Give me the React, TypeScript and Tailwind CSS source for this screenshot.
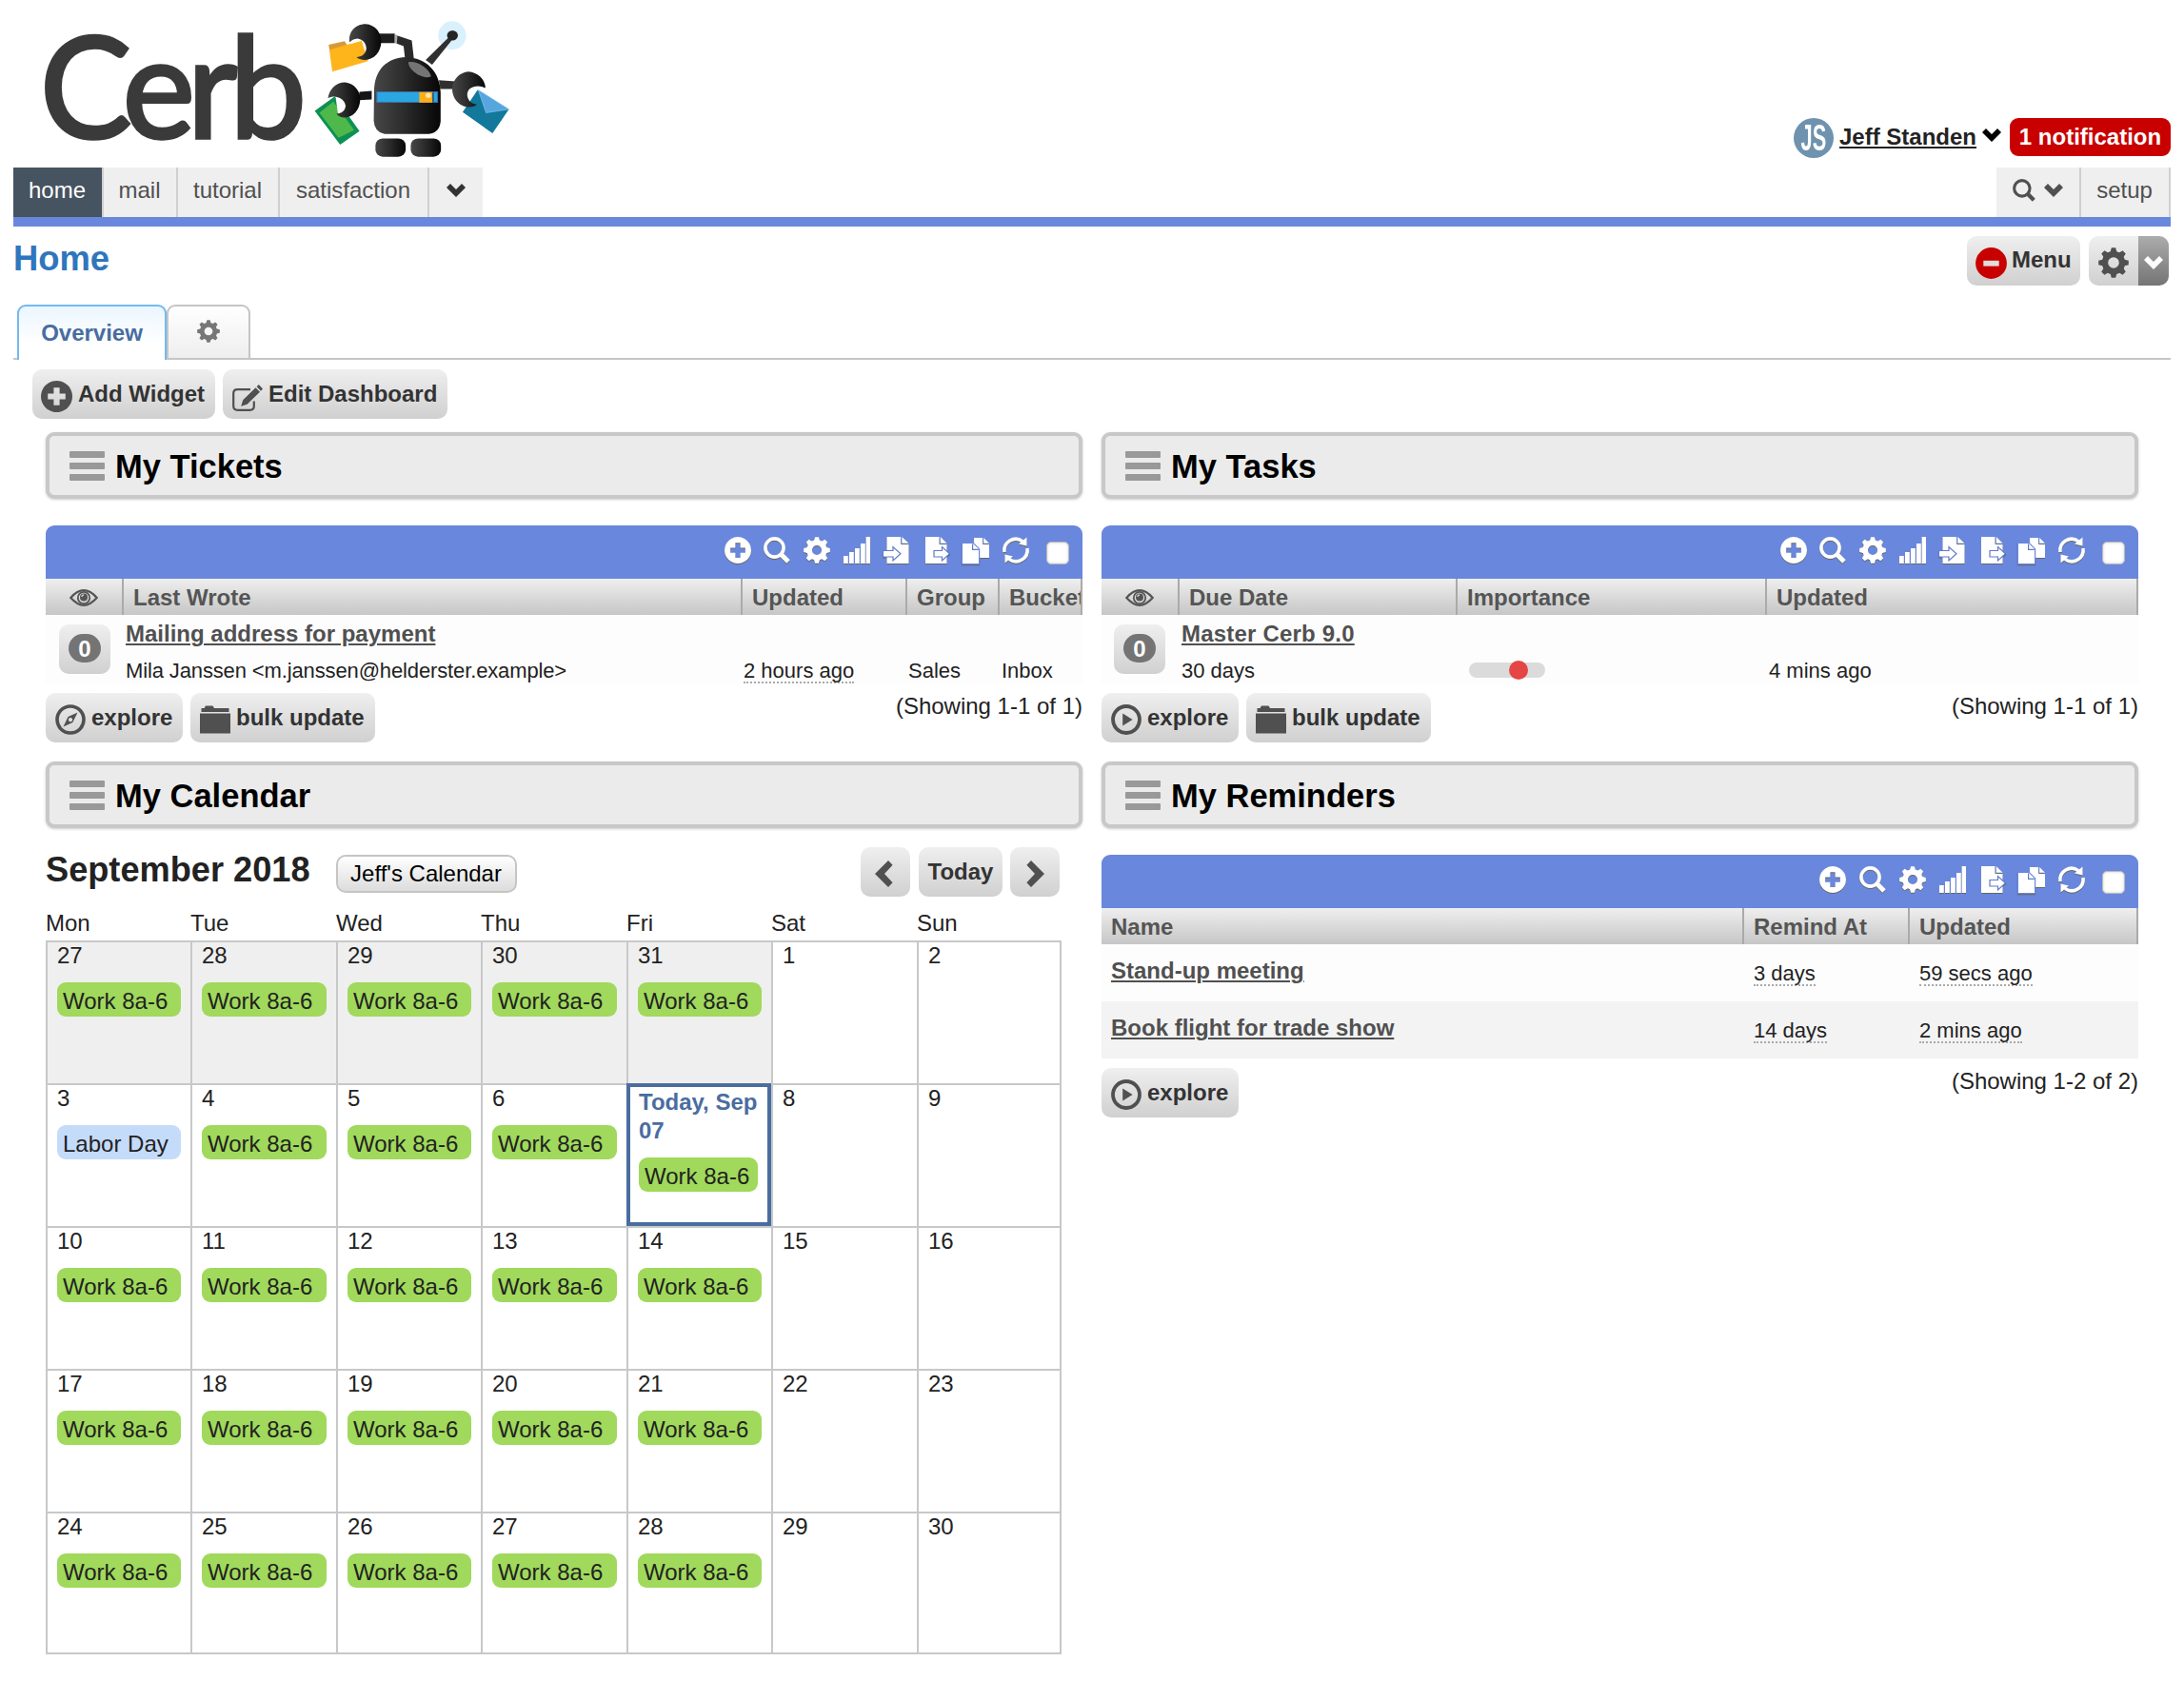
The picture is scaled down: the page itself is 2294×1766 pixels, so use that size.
import React from "react";

type IconProps = { className?: string };

const Gear = ({ className = "" }: IconProps) => (
  <svg viewBox="0 0 32 32" className={className} fill="currentColor">
    <circle cx="16" cy="16" r="9" fill="none" stroke="currentColor" strokeWidth="6.4" />
    {[0, 45, 90, 135, 180, 225, 270, 315].map((a) => (
      <path key={a} d="M12.4 5.5 L13.8 0.2 H18.2 L19.6 5.5 Z" transform={`rotate(${a} 16 16)`} />
    ))}
  </svg>
);

const Chevron = ({ className = "" }: IconProps) => (
  <svg viewBox="0 0 20 14" className={className} fill="currentColor">
    <path d="M0 4 L4 0 L10 6 L16 0 L20 4 L10 14 Z" />
  </svg>
);

const SearchIcon = ({ className = "" }: IconProps) => (
  <svg viewBox="0 0 28 28" className={className} fill="none" stroke="currentColor">
    <circle cx="11.5" cy="11.5" r="9.6" strokeWidth="3.6" />
    <path d="M18.5 18.5 L26 26" strokeWidth="5" />
  </svg>
);

const PlusCircle = ({ className = "" }: IconProps) => (
  <svg viewBox="0 0 32 32" className={className} fill="currentColor" fillRule="evenodd">
    <path d="M16 0 a16 16 0 1 0 0.01 0 Z M13 7 h6 v6 h6 v6 h-6 v6 h-6 v-6 h-6 v-6 h6 Z" />
  </svg>
);

const Bars = ({ className = "" }: IconProps) => (
  <svg viewBox="0 0 28 28" className={className} fill="currentColor">
    <path d="M0 20h4.8v8H0z M6 16h4.8v12H6z M12 12h4.8v16H12z M18 7h4.8v21H18z M23.6 0h4.4v28h-4.4z" />
  </svg>
);

const ImportIcon = ({ className = "" }: IconProps) => (
  <svg viewBox="0 0 28 28" className={className} fill="currentColor">
    <path d="M3.5 0 H18 V8 H26.5 V28 H3.5 Z M19.3 0 L26.5 6.7 H19.3 Z" />
    <path d="M0 14.5 H10 V10.5 L18 17.7 L10 25 V21 H0 Z" stroke="#5f7bc9" strokeWidth="1.2" />
    <path d="M0 15.2 H4 V20.3 H0 Z" />
  </svg>
);

const ExportIcon = ({ className = "" }: IconProps) => (
  <svg viewBox="0 0 28 28" className={className} fill="currentColor">
    <path d="M2 0 H16.5 V8 H24.5 V28 H2 Z M17.8 0 L24.5 6.7 H17.8 Z" />
    <path d="M11 14.5 H19.5 V10.5 L27.5 17.7 L19.5 25 V21 H11 Z" stroke="#5f7bc9" strokeWidth="1.2" />
  </svg>
);

const CopyIcon = ({ className = "" }: IconProps) => (
  <svg viewBox="0 0 28 28" className={className} fill="currentColor">
    <path d="M12 1 H21 V8 H28 V22 H12 Z M22.2 1 L28 6.8 H22.2 Z" />
    <path d="M-0.6 6.5 H11.4 L17.6 12.7 V28.6 H-0.6 Z" stroke="#6987dc" strokeWidth="1.2" />
    <path d="M10.6 7.4 V13.4 H16.8" fill="none" stroke="#5f7bc9" strokeWidth="1.2" />
  </svg>
);

const Refresh = ({ className = "" }: IconProps) => (
  <svg viewBox="0 0 28 28" className={className} fill="currentColor">
    <path d="M2 16 A12 12 0 0 1 21 4.6" fill="none" stroke="currentColor" strokeWidth="3.6" />
    <path d="M26 12 A12 12 0 0 1 7 23.4" fill="none" stroke="currentColor" strokeWidth="3.6" />
    <path d="M25.5 0.4 V9.4 L17 7.4 Z" />
    <path d="M2.5 27.6 V18.6 L11 20.6 Z" />
  </svg>
);

const Eye = ({ className = "" }: IconProps) => (
  <svg viewBox="0 0 30 18" className={className} fill="none" stroke="currentColor">
    <path d="M1.3 9 Q15 -6.6 28.7 9 Q15 24.6 1.3 9 Z" strokeWidth="2.2" />
    <circle cx="15" cy="9" r="6.2" strokeWidth="1.8" />
    <circle cx="15" cy="8.4" r="4" fill="currentColor" stroke="none" />
    <path d="M12.8 8 Q13 6 15 5.8" stroke="#ddd" strokeWidth="1.2" />
  </svg>
);

const Compass = ({ className = "" }: IconProps) => (
  <svg viewBox="0 0 32 32" className={className} fill="currentColor" fillRule="evenodd">
    <circle cx="16" cy="16" r="14" fill="none" stroke="currentColor" strokeWidth="3.6" />
    <path d="M23.5 8.5 L18.3 19 L8.5 23.5 L13.5 13 Z M16 14 a2.1 2.1 0 1 0 0.01 0 Z" />
  </svg>
);

const Play = ({ className = "" }: IconProps) => (
  <svg viewBox="0 0 32 32" className={className} fill="currentColor">
    <circle cx="16" cy="16" r="14" fill="none" stroke="currentColor" strokeWidth="3.8" />
    <path d="M12.2 9.6 L22.6 16 L12.2 22.4 Z" />
  </svg>
);

const Folder = ({ className = "" }: IconProps) => (
  <svg viewBox="0 0 32 30" className={className} fill="currentColor">
    <path d="M1.5 7 V3 H4.5 L6 0.4 H13.5 L15 3 H30.5 V7 Z M0 8.6 H32 V29.6 H0 Z" />
  </svg>
);

const EditIcon = ({ className = "" }: IconProps) => (
  <svg viewBox="0 0 32 28" className={className} fill="currentColor">
    <path
      d="M19 5.2 H5.5 Q1.2 5.2 1.2 9.5 V22.5 Q1.2 26.8 5.5 26.8 H18.5 Q22.8 26.8 22.8 22.5 V17.5"
      fill="none"
      stroke="currentColor"
      strokeWidth="2.2"
    />
    <path d="M9.2 22.8 L11.2 16.2 L24.5 3.2 L29 7.8 L15.6 20.8 Z M25.6 2.2 L27.8 0 L32 4.6 L30 6.8 Z" />
  </svg>
);

const MinusCircle = ({ className = "" }: IconProps) => (
  <svg viewBox="0 0 33 33" className={className}>
    <circle cx="16.5" cy="16.5" r="16.4" fill="#c80000" />
    <rect x="8.3" y="13.8" width="16.4" height="5.8" fill="#e4dcdc" />
  </svg>
);

const Angle = ({ className = "" }: IconProps) => (
  <svg viewBox="0 0 19 28" className={className} fill="currentColor">
    <path d="M14 0 L18.6 4.8 L10 14 L18.6 23.2 L14 28 L0 14 Z" />
  </svg>
);

const Claw = ({ d }: { d: string }) => <path d={d} fill="url(#body)" />;

const Robot = () => (
  <svg viewBox="900 50 620 460" preserveAspectRatio="none" className="mt-[17px] h-[153px] w-[221px]">
    <defs>
      <linearGradient id="body" x1="0" x2="1">
        <stop offset="0" stopColor="#474747" />
        <stop offset="0.45" stopColor="#2c2c2c" />
        <stop offset="1" stopColor="#060606" />
      </linearGradient>
    </defs>
    <ellipse cx="1329" cy="111" rx="41" ry="45" fill="#d9f1fd" />
    <path d="M1251 188 L1318 118 L1328 126 L1270 203 Z" fill="#303030" />
    <circle cx="1330" cy="111" r="16" fill="#262626" />
    <path d="M1112 105 H1160 V135 H1112 Z" fill="#1c1c1c" />
    <path d="M1164 110 L1210 127 L1216 182 L1190 182 L1186 145 L1164 136 Z" fill="#2a2a2a" />
    <path d="M1160 108 L1168 110 L1166 137 L1160 135 Z" fill="#aaa" />
    <path d="M965 140 L1012 129 L1020 142 L968 158 Z" fill="#d99a35" />
    <path d="M967 157 L1062 127 L1081 192 L976 225 Z" fill="#feb51c" />
    <path d="M1030 138 Q1040 122 1056 121 L1066 140 L1060 128 Z" fill="#fff" />
    <Claw d="M1027 133 C1022 100 1044 75 1074 75 C1103 77 1121 103 1120 132 C1119 164 1098 187 1073 188 C1060 188 1052 184 1047 179 C1062 179 1074 170 1076 153 C1076 136 1066 124 1050 121 C1040 122 1032 127 1027 133 Z" />
    <path d="M1056 289 L1092 286 V313 L1052 315 Z" fill="#161616" />
    <path d="M924 349 L983 303 L1056 413 L999 456 Z" fill="#0c9155" />
    <path d="M938 355 L979 320 L1000 350 L1040 410 L994 434 Z" fill="#4fb84a" />
    <path d="M986 308 Q1018 316 1013 350 Q1003 363 993 362 Z" fill="#fff" />
    <Claw d="M963 309 C967 280 987 259 1013 259 C1041 262 1059 287 1058 314 C1057 348 1036 370 1013 370 C1000 370 992 365 988 358 C1003 357 1013 350 1015 334 C1014 319 1003 307 983 304 C975 304 968 306 963 309 Z" />
    <path d="M1290 252 L1340 256 V280 H1294 Z" fill="#303030" />
    <path d="M1099 290 C1099 215 1140 181 1193 179 C1252 181 1294 225 1295 292 V382 Q1292 418 1260 422 H1130 Q1100 417 1098 380 Z" fill="url(#body)" />
    <path d="M1200 195 C1226 190 1261 214 1267 240 C1247 253 1199 222 1200 195 Z" fill="#747474" />
    <rect x="1107" y="289" width="179" height="33" fill="#2aa6e2" stroke="#426ba0" strokeWidth="3" />
    <rect x="1232" y="290" width="39" height="33" fill="#fdae18" />
    <rect x="1271" y="291" width="4" height="31" fill="#264c73" />
    <circle cx="1259" cy="300" r="8" fill="#ffe5b0" />
    <path d="M1384 300 Q1392 285 1405 284 L1400 325 Q1382 322 1380 306 Z" fill="#fff" />
    <path d="M1404 283 L1496 345 L1448 420 L1360 353 Z" fill="#12789c" />
    <path d="M1406 283 L1496 344 L1429 355 Z" fill="#57a6de" stroke="#8cc6ee" strokeWidth="2" />
    <Claw d="M1329 280 C1330 249 1352 227 1377 225 C1404 227 1426 248 1427 277 C1412 268 1393 269 1380 280 C1369 293 1373 311 1385 323 Q1395 329 1402 329 C1394 337 1382 338 1370 336 C1345 330 1330 308 1329 280 Z" />
    <rect x="1103" y="436" width="89" height="58" rx="22" fill="url(#body)" />
    <rect x="1207" y="436" width="89" height="58" rx="22" fill="url(#body)" />
  </svg>
);

const Button = ({ className = "", children }: { className?: string; children: React.ReactNode }) => (
  <button
    className={`flex h-[52px] shrink-0 items-center whitespace-nowrap rounded-[10px] bg-gradient-to-b from-[#efefef] to-[#d0d0d0] font-bold leading-[30px] text-[#333] ${className}`}
  >
    {children}
  </button>
);

const WidgetTitle = ({ title }: { title: string }) => (
  <div className="flex h-[70px] items-center rounded-[9px] border-4 border-[#c8c8c8] bg-[#ebebeb] pl-[21px] shadow-[0_1px_3px_rgba(0,0,0,0.2)]">
    <div className="flex w-[37px] flex-col gap-[5px] pt-[1px]">
      <div className="h-[7px] rounded-[1px] bg-[#999]" />
      <div className="h-[7px] rounded-[1px] bg-[#999]" />
      <div className="h-[7px] rounded-[1px] bg-[#999]" />
    </div>
    <h2 className="ml-[11px] pt-[2px] text-[34.5px] font-bold leading-[40px] text-black">{title}</h2>
  </div>
);

const Toolbar = ({ withImport = true }: { withImport?: boolean }) => {
  const icon = "h-[28px] w-[28px] overflow-visible drop-shadow-[0_1.5px_0_#666]";
  return (
    <div className="flex h-[56px] items-center justify-end gap-[13.8px] rounded-t-[9px] bg-[#6987dc] pb-[4px] pr-[14px] text-white">
      <PlusCircle className={icon} />
      <SearchIcon className={icon} />
      <Gear className={icon} />
      <Bars className={icon} />
      {withImport && <ImportIcon className={icon} />}
      <ExportIcon className={icon} />
      <CopyIcon className={icon} />
      <Refresh className={icon} />
      <span className="ml-[4px] mt-[5px] h-[24px] w-[24px] rounded-[5px] border border-[#bbb] bg-white shadow-[inset_0_0_3px_#ccc]" />
    </div>
  );
};

const headRow =
  "grid h-[38px] overflow-hidden border-r-2 border-[#aaa] bg-gradient-to-b from-[#efefef] to-[#c6c6c6] font-bold leading-[39px] text-[#555]";
const headCell = "border-l-2 border-[#aaa] pl-[10px] whitespace-nowrap";
const subText = "text-[22px] leading-[30px] whitespace-nowrap";
const link = "font-bold leading-[30px] text-[#505050] underline decoration-2 underline-offset-[2px]";

const Dotted = ({ children }: { children: React.ReactNode }) => (
  <span className="block h-[26px] w-fit border-b-2 border-dotted border-[#aaa] text-[22px] leading-[25px] whitespace-nowrap">
    {children}
  </span>
);

const CountButton = ({ className = "" }: IconProps) => (
  <div
    className={`mt-[10px] flex h-[52px] w-[54px] shrink-0 items-center justify-center rounded-[10px] bg-gradient-to-b from-[#efefef] to-[#d0d0d0] pb-[2px] ${className}`}
  >
    <span className="h-[30px] w-[34px] rounded-[15px] bg-[#747474] text-center text-[24px] font-bold leading-[31px] text-white">0</span>
  </div>
);

const Footer = ({ icon, bulk = true, range }: { icon: React.ReactNode; bulk?: boolean; range: string }) => (
  <div className="mt-[10px] flex h-[52px] items-start">
    <Button className="w-[144px] pl-[10px]">
      {icon}
      <span className="ml-[6px]">explore</span>
    </Button>
    {bulk && (
      <Button className="ml-[8px] w-[194px] pl-[10px]">
        <Folder className="mt-[4px] h-[30px] w-[32px] text-[#505050]" />
        <span className="ml-[6px]">bulk update</span>
      </Button>
    )}
    <span className="ml-auto mt-[-1px] leading-[30px]">{range}</span>
  </div>
);

const days: { n: string; kind?: "work" | "holiday"; past?: boolean; today?: boolean }[] = [
  ...[27, 28, 29, 30, 31].map((n) => ({ n: String(n), kind: "work" as const, past: true })),
  { n: "1" },
  { n: "2" },
  { n: "3", kind: "holiday" },
  { n: "4", kind: "work" },
  { n: "5", kind: "work" },
  { n: "6", kind: "work" },
  { n: "Today, Sep 07", kind: "work", today: true },
  { n: "8" },
  { n: "9" },
  ...Array.from({ length: 21 }, (_, i) => ({
    n: String(10 + i),
    kind: i % 7 < 5 ? ("work" as const) : undefined,
  })),
];

const Calendar = () => (
  <div>
    <div className="flex h-[98px] items-start pt-[20px]">
      <h2 className="w-[305px] whitespace-nowrap pt-[4px] text-[36.2px] font-bold leading-[40px]">September 2018</h2>
      <button className="mt-[8px] h-[40px] w-[190px] rounded-[10px] border-2 border-[#c5c5c5] bg-gradient-to-b from-white to-[#dcdcdc] pr-[1px] leading-[36px] text-black">
        Jeff's Calendar
      </button>
      <Button className="ml-[361px] w-[52px] justify-center pr-[3px]">
        <Angle className="mt-[4px] h-[28px] w-[19px] text-[#505050]" />
      </Button>
      <Button className="ml-[9px] w-[88px] justify-center">Today</Button>
      <Button className="ml-[8px] w-[52px] justify-center">
        <Angle className="mt-[4px] h-[28px] w-[19px] rotate-180 text-[#505050]" />
      </Button>
    </div>
    <div className="mt-[-13px] grid h-[33px] grid-cols-[152px_153px_152px_153px_152px_153px_152px] leading-[30px]">
      {["Mon", "Tue", "Wed", "Thu", "Fri", "Sat", "Sun"].map((d) => (
        <span key={d}>{d}</span>
      ))}
    </div>
    <div className="grid w-[1067px] grid-cols-[152px_153px_152px_153px_152px_153px_150px] grid-rows-[150px_150px_150px_150px_148px] border-l-2 border-t-2 border-[#c8c8c8]">
      {days.map((d, i) => (
        <div
          key={i}
          className={`relative border-b-2 border-r-2 border-[#c8c8c8] ${d.past ? "bg-[#efefef]" : ""} ${
            d.today ? "pl-[11px] pr-[14px] pt-[4px]" : "px-[10px]"
          }`}
        >
          {d.today && <div className="absolute -left-[2px] -top-[2px] bottom-0 right-0 border-4 border-[#4a6d9f]" />}
          <div className={`mt-[-1px] leading-[30px] ${d.today ? "font-bold text-[#4a6d9f]" : ""}`}>{d.n}</div>
          {d.kind && (
            <div
              className={`mt-[13px] h-[36px] whitespace-nowrap rounded-[9px] pl-[6px] pt-[5px] leading-[30px] ${
                d.kind === "work" ? "bg-[#a0d95b]" : "bg-[#c5dbfa]"
              }`}
            >
              {d.kind === "work" ? "Work 8a-6" : "Labor Day"}
            </div>
          )}
        </div>
      ))}
    </div>
  </div>
);

const NavTab = ({ children, className = "" }: { children: React.ReactNode; className?: string }) => (
  <div className={`flex items-center justify-center pb-[4px] pr-[1px] ${className}`}>{children}</div>
);

export default function App() {
  return (
    <div className="h-[1766px] w-[2294px] overflow-hidden bg-white px-[14px] font-['Liberation_Sans',Arial,sans-serif] text-[24px] text-[#222]">
      <header className="flex h-[176px] items-start">
        <div className="ml-[28px] w-[280px] scale-y-[1.03] whitespace-nowrap font-['Lato',sans-serif] text-[144px] leading-[176px] tracking-[-8px] text-[#3a3a3a] [-webkit-text-stroke:3.5px_#3a3a3a]">
          Cerb
        </div>
        <Robot />
        <div className="ml-auto mt-[124px] flex items-start text-[24px] font-bold leading-[30px]">
          <div className="flex h-[42px] w-[42px] items-center justify-center rounded-full bg-[#6f93ae]">
            <span className="scale-x-[0.56] text-[39px] text-white">JS</span>
          </div>
          <span className="ml-[6px] mt-[5px] w-[144px] whitespace-nowrap underline decoration-2 underline-offset-[2px]">Jeff Standen</span>
          <Chevron className="ml-[6px] mt-[11px] h-[14px] w-[20px] text-black" />
          <span className="ml-[9px] h-[40px] w-[169px] rounded-[9px] bg-[#c80000] pt-[5px] text-center text-white">1 notification</span>
        </div>
      </header>

      <nav className="flex h-[62px] border-b-[10px] border-[#6987dc] text-[#505050]">
        <NavTab className="w-[93px] bg-[#465361] text-white">home</NavTab>
        <NavTab className="w-[78px] border-l-2 border-[#d0d0d0] bg-[#efefef]">mail</NavTab>
        <NavTab className="w-[107px] border-l-2 border-[#d0d0d0] bg-[#efefef]">tutorial</NavTab>
        <NavTab className="w-[157px] border-l-2 border-[#d0d0d0] bg-[#efefef]">satisfaction</NavTab>
        <NavTab className="w-[58px] border-l-2 border-[#d0d0d0] bg-[#efefef]">
          <Chevron className="h-[14px] w-[20px] text-[#333]" />
        </NavTab>
        <NavTab className="ml-auto w-[87px] bg-[#efefef]">
          <SearchIcon className="h-[24px] w-[24px]" />
          <Chevron className="ml-[9px] h-[14px] w-[20px]" />
        </NavTab>
        <NavTab className="w-[96px] border-x-2 border-[#d0d0d0] bg-[#efefef]">setup</NavTab>
      </nav>

      <div className="flex h-[82px] items-start pt-[10px]">
        <h1 className="pt-[4px] text-[36.4px] font-bold leading-[40px] text-[#2f76bd]">Home</h1>
        <Button className="ml-auto w-[119px] pl-[9px]">
          <MinusCircle className="mt-[4px] h-[33px] w-[33px]" />
          <span className="mb-[3px] ml-[5px]">Menu</span>
        </Button>
        <div className="ml-[9px] mr-[2px] flex h-[52px] w-[84px] overflow-hidden rounded-[10px]">
          <div className="flex w-[52px] items-center justify-center bg-gradient-to-b from-[#efefef] to-[#d0d0d0] pt-[4px] text-[#505050]">
            <Gear className="h-[32px] w-[32px]" />
          </div>
          <div className="flex w-[32px] items-center justify-center bg-gradient-to-b from-[#acacac] to-[#757575] pt-[4px] text-white">
            <Chevron className="h-[14px] w-[20px]" />
          </div>
        </div>
      </div>

      <div className="flex h-[58px] items-start border-b-2 border-[#c5c5c5] pl-[4px]">
        <div className="h-[58px] w-[157px] shrink-0 rounded-t-[9px] border-x-2 border-t-2 border-[#74b9ef] bg-gradient-to-b from-[#ebf6ff] to-white to-70% pt-[13px] text-center font-bold leading-[30px] text-[#476d9f]">
          Overview
        </div>
        <div className="flex h-[56px] w-[88px] items-center justify-center rounded-t-[9px] border-x-2 border-t-2 border-[#c5c5c5] bg-gradient-to-b from-white to-[#eee] pb-[2px] text-[#777]">
          <Gear className="h-[24px] w-[24px]" />
        </div>
      </div>

      <div className="mt-[10px] flex pl-[20px]">
        <Button className="w-[192px] pl-[9px]">
          <PlusCircle className="mt-[4px] h-[33px] w-[33px] text-[#505050]" />
          <span className="ml-[6px]">Add Widget</span>
        </Button>
        <Button className="ml-[8px] w-[236px] pl-[10px]">
          <EditIcon className="mt-[8px] h-[28px] w-[32px] text-[#505050]" />
          <span className="ml-[6px]">Edit Dashboard</span>
        </Button>
      </div>

      <main className="mt-[14px] grid grid-cols-[1089px_1089px] gap-x-[20px] pl-[34px]">
        <section>
          <WidgetTitle title="My Tickets" />
          <div className="mt-[28px]">
            <Toolbar />
            <div className={`${headRow} grid-cols-[80px_650px_173px_97px_1fr]`}>
              <div className="flex items-center justify-center">
                <Eye className="h-[18px] w-[30px]" />
              </div>
              <div className={headCell}>Last Wrote</div>
              <div className={headCell}>Updated</div>
              <div className={headCell}>Group</div>
              <div className={headCell}>Bucket</div>
            </div>
            <div className="flex h-[72px] bg-[#fdfdfd]">
              <CountButton className="ml-[14px]" />
              <div className="ml-[16px] pt-[5px]">
                <div className={link}>Mailing address for payment</div>
                <div className={`mt-[9px] grid grid-cols-[649px_173px_98px_84px] ${subText}`}>
                  <span className="tracking-[-0.13px]">Mila Janssen &lt;m.janssen@helderster.example&gt;</span>
                  <span className="pt-[2px]">
                    <Dotted>2 hours ago</Dotted>
                  </span>
                  <span>Sales</span>
                  <span>Inbox</span>
                </div>
              </div>
            </div>
          </div>
          <Footer icon={<Compass className="mt-[4px] h-[32px] w-[32px] text-[#505050]" />} range="(Showing 1-1 of 1)" />
        </section>

        <section>
          <WidgetTitle title="My Tasks" />
          <div className="mt-[28px]">
            <Toolbar />
            <div className={`${headRow} grid-cols-[80px_292px_325px_1fr]`}>
              <div className="flex items-center justify-center">
                <Eye className="h-[18px] w-[30px]" />
              </div>
              <div className={headCell}>Due Date</div>
              <div className={headCell}>Importance</div>
              <div className={headCell}>Updated</div>
            </div>
            <div className="flex h-[72px] bg-[#fdfdfd]">
              <CountButton className="ml-[13px]" />
              <div className="ml-[17px] pt-[5px]">
                <div className={`${link} tracking-[0.2px]`}>Master Cerb 9.0</div>
                <div className={`mt-[9px] grid grid-cols-[302px_315px_200px] ${subText}`}>
                  <span>30 days</span>
                  <div className="mt-[6px] flex h-[16px] w-[80px] items-center rounded-full bg-[#dbdbdb]">
                    <div className="ml-[42px] h-[20px] w-[20px] shrink-0 rounded-full bg-[#e64545]" />
                  </div>
                  <span>4 mins ago</span>
                </div>
              </div>
            </div>
          </div>
          <Footer icon={<Play className="mt-[4px] h-[32px] w-[32px] text-[#505050]" />} range="(Showing 1-1 of 1)" />
        </section>

        <section className="mt-[20px]">
          <WidgetTitle title="My Calendar" />
          <Calendar />
        </section>

        <section className="mt-[20px]">
          <WidgetTitle title="My Reminders" />
          <div className="mt-[28px]">
            <Toolbar withImport={false} />
            <div className={`${headRow} grid-cols-[673px_174px_1fr]`}>
              <div className="pl-[10px]">Name</div>
              <div className={headCell}>Remind At</div>
              <div className={headCell}>Updated</div>
            </div>
            <div className="grid h-[60px] grid-cols-[675px_174px_1fr] bg-[#fdfdfd] pl-[10px]">
              <span className={`pt-[13px] ${link}`}>Stand-up meeting</span>
              <span className="pt-[18px]">
                <Dotted>3 days</Dotted>
              </span>
              <span className="pt-[18px]">
                <Dotted>59 secs ago</Dotted>
              </span>
            </div>
            <div className="grid h-[60px] grid-cols-[675px_174px_1fr] bg-[#f3f3f3] pl-[10px]">
              <span className={`pt-[13px] ${link}`}>Book flight for trade show</span>
              <span className="pt-[18px]">
                <Dotted>14 days</Dotted>
              </span>
              <span className="pt-[18px]">
                <Dotted>2 mins ago</Dotted>
              </span>
            </div>
          </div>
          <Footer
            bulk={false}
            icon={<Play className="mt-[4px] h-[32px] w-[32px] text-[#505050]" />}
            range="(Showing 1-2 of 2)"
          />
        </section>
      </main>
    </div>
  );
}
